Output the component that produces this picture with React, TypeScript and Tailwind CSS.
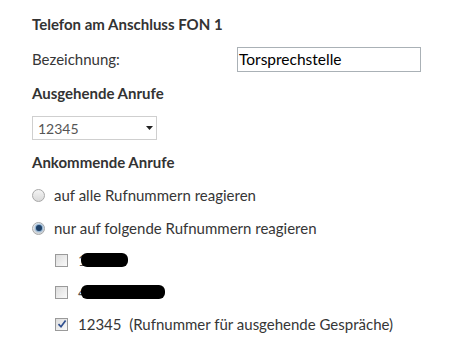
const Radio = ({ checked }: { checked?: boolean }) => (
  <span className="relative flex h-[13px] w-[13px] shrink-0 items-center justify-center rounded-full border border-[#a8a8a8] bg-gradient-to-b from-[#f4f4f4] to-[#d9d9d9]">
    {checked && <span className="h-[6px] w-[6px] rounded-full bg-[#1d3f66] shadow-[0_0_2px_1px_#6d9cc8]" />}
  </span>
);

const Check = ({ checked }: { checked?: boolean }) => (
  <span className="flex h-[13px] w-[13px] shrink-0 items-center justify-center border border-[#9a9a9a] bg-gradient-to-br from-[#dcdcdc] to-[#fafafa]">
    {checked && (
      <svg width="10" height="10" viewBox="0 0 10 10">
        <path d="M1.5 5.2 L4 7.8 L8.6 1.6" fill="none" stroke="#2f4f8f" strokeWidth="1.7" />
      </svg>
    )}
  </span>
);

const Hidden = ({ digit, width }: { digit: string; width: number }) => (
  <span className="relative flex h-5 items-center text-[#555]">
    {digit}
    <span className="absolute left-[3px] top-[3px] h-[14px] rounded-[6px] bg-black" style={{ width }} />
  </span>
);

export default function App() {
  return (
    <div className="min-h-[353px] w-[458px] bg-white pl-8 pt-[14px] font-['Lato',sans-serif] text-[15px] text-[#363636]">
      <div className="flex h-5 items-center text-[15px] font-bold text-[#333]">Telefon am Anschluss FON 1</div>

      <div className="mt-[13px] flex h-[25px] items-center">
        <span className="w-[205px]">Bezeichnung:</span>
        <div className="flex h-[25px] w-[184px] items-center border border-[#aab1b6] px-[1px] text-[15.5px] text-black">
          Torsprechstelle
        </div>
      </div>

      <div className="mt-[11px] flex h-5 items-center font-bold text-[#333]">Ausgehende Anrufe</div>

      <div className="mt-[13px] flex h-6 w-[125px] items-center justify-between border border-[#cfcfcf] pl-[5px] pr-[3px] text-[14px] text-[#555]">
        <span>12345</span>
        <svg width="7" height="4" viewBox="0 0 7 4">
          <path d="M0 0 H7 L3.5 4 Z" fill="#222" />
        </svg>
      </div>

      <div className="mt-3 flex h-5 items-center font-bold text-[#333]">Ankommende Anrufe</div>

      <div className="mt-[13px] flex h-5 items-center gap-[9px]">
        <Radio />
        <span>auf alle Rufnummern reagieren</span>
      </div>
      <div className="mt-[13px] flex h-5 items-center gap-[9px]">
        <Radio checked />
        <span>nur auf folgende Rufnummern reagieren</span>
      </div>

      <div className="ml-[23px]">
        <div className="mt-3 flex h-5 items-center gap-[10px]">
          <Check />
          <Hidden digit="1" width={47} />
        </div>
        <div className="mt-3 flex h-5 items-center gap-[10px]">
          <Check />
          <Hidden digit="4" width={84} />
        </div>
        <div className="mt-3 flex h-5 items-center gap-[10px]">
          <Check checked />
          <span className="whitespace-pre">12345  (Rufnummer für ausgehende Gespräche)</span>
        </div>
      </div>
    </div>
  );
}
